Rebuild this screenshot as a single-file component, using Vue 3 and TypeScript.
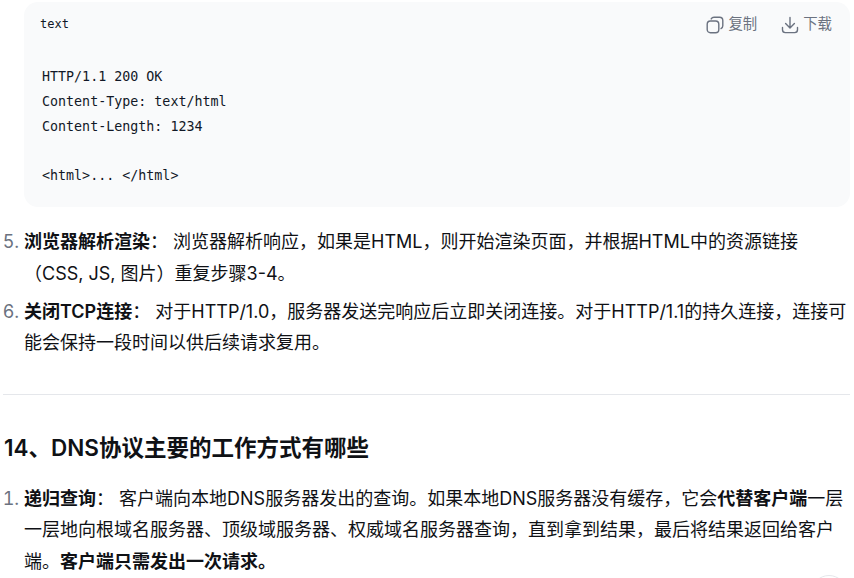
<script setup lang="ts">
const code: string = `HTTP/1.1 200 OK
Content-Type: text/html
Content-Length: 1234

<html>... </html>`
</script>

<template>
  <main class="page">
    <section class="code-card">
      <header class="code-head">
        <span class="lang">text</span>
        <div class="actions">
          <span class="action">
            <svg width="18" height="18" viewBox="0 0 18 18" fill="none" stroke="#6b7280" stroke-width="1.4">
              <rect x="1.2" y="5" width="11.6" height="11.8" rx="3.2" />
              <path d="M5.2 2.9C5.8 1.8 6.8 1.2 8 1.2h5.6c1.8 0 3.2 1.4 3.2 3.2v5.4c0 1.3-.7 2.3-1.8 2.8" stroke-linecap="round" />
            </svg>
            <span class="action-label">复制</span>
          </span>
          <span class="action">
            <svg width="18" height="18" viewBox="0 0 18 18" fill="none" stroke="#6b7280" stroke-width="1.4" stroke-linecap="round" stroke-linejoin="round">
              <path d="M9 1.5v10.2M4.6 7.6 9 12l4.4-4.4" />
              <path d="M1.5 11.5v2.3c0 1.6 1.2 2.8 2.8 2.8h9.4c1.6 0 2.8-1.2 2.8-2.8v-2.3" />
            </svg>
            <span class="action-label">下载</span>
          </span>
        </div>
      </header>
      <pre class="code-body">{{ code }}</pre>
    </section>

    <ol class="steps" start="5">
      <li><strong>浏览器解析渲染</strong>： 浏览器解析响应，如果是HTML，则开始渲染页面，并根据HTML中的资源链接（CSS, JS, 图片）重复步骤3-4。</li>
      <li><strong>关闭TCP连接</strong>： 对于HTTP/1.0，服务器发送完响应后立即关闭连接。对于HTTP/1.1的持久连接，连接可能会保持一段时间以供后续请求复用。</li>
    </ol>

    <hr class="rule" />

    <h2 class="title">14、DNS协议主要的工作方式有哪些</h2>

    <ol class="steps">
      <li><strong>递归查询</strong>： 客户端向本地DNS服务器发出的查询。如果本地DNS服务器没有缓存，它会<strong>代替客户端</strong>一层一层地向根域名服务器、顶级域服务器、权威域名服务器查询，直到拿到结果，最后将结果返回给客户端。<strong>客户端只需发出一次请求。</strong></li>
    </ol>

    <span class="fab"></span>
  </main>
</template>

<style scoped>
.page {
  position: relative;
  width: 854px;
  height: 578px;
  overflow: hidden;
  background: #fff;
  padding-top: 2px;
  box-sizing: border-box;
  font-family: "Inter", "Noto Sans CJK SC", sans-serif;
  font-size: 18px;
  line-height: 31.5px;
  color: #0f1115;
}
.code-card {
  margin-left: 24px;
  width: 826px;
  height: 205px;
  box-sizing: border-box;
  background: #f9fafb;
  border-radius: 14px;
  padding: 0 16px 0 16px;
}
.code-head {
  display: flex;
  justify-content: space-between;
  align-items: center;
  height: 45px;
}
.lang {
  font-family: "DejaVu Sans Mono", monospace;
  font-size: 12px;
  color: #111827;
}
.actions {
  display: flex;
  gap: 24px;
  margin-right: 2px;
}
.action {
  display: flex;
  align-items: center;
  gap: 4px;
  font-size: 14.4px;
  line-height: 20px;
  color: #6b7280;
}
.action-label {
  margin-bottom: 2px;
}
.code-body {
  margin: 18px 0 0 2px;
  font-family: "DejaVu Sans Mono", monospace;
  font-size: 13.33px;
  line-height: 24.8px;
  color: #111827;
}
.steps {
  margin: 19.2px 0 0;
  padding: 0 0 0 24px;
  width: 826px;
}
.steps li {
  margin-bottom: 6.5px;
}
.steps li::marker {
  color: #6b7280;
}
.steps strong {
  font-weight: 600;
}
.rule {
  margin: 35.3px 4px 0 3px;
  border: 0;
  border-top: 1px solid #e5e7eb;
}
.title {
  margin: 29px 0 0 4px;
  font-size: 22.5px;
  line-height: 48px;
  font-weight: 600;
}
.title + .steps {
  margin-top: 10.6px;
}
.fab {
  position: absolute;
  left: 811px;
  top: 575px;
  width: 34px;
  height: 34px;
  border-radius: 50%;
  background: #fff;
  border: 1px solid #e5e7eb;
}
</style>
